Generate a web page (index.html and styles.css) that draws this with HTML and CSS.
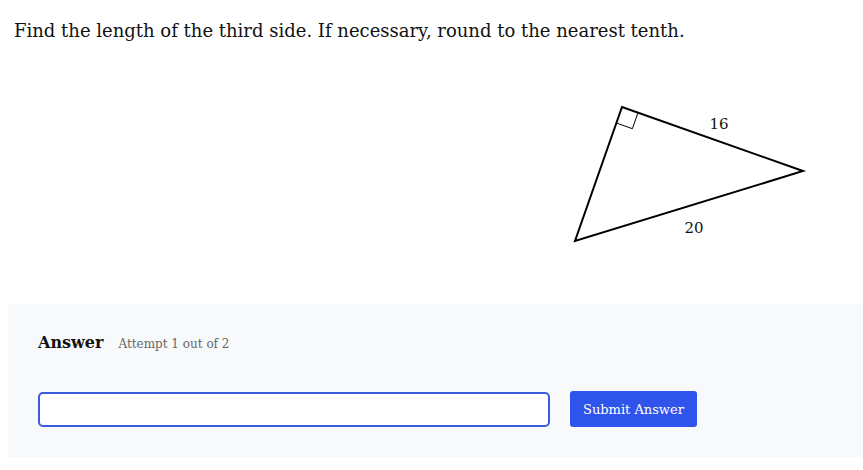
FILE: index.html
```html
<!DOCTYPE html>
<html lang="en">
<head>
  <meta charset="UTF-8" />
  <title>Question</title>
  <link rel="stylesheet" href="styles.css">
</head>
<body>

  <p class="question">Find the length of the third side. If necessary, round to the nearest tenth.</p>

  <div class="figure">
    <svg width="863" height="261" viewBox="0 43 863 261">
      <polygon points="622,107 803,171 575,241" fill="none" stroke="#000" stroke-width="2" stroke-linejoin="miter"/>
      <polyline points="638,112.7 632.4,128.7 616.4,123" fill="none" stroke="#000" stroke-width="1"/>
      <text x="719" y="129" class="label" text-anchor="middle">16</text>
      <text x="694" y="233" class="label" text-anchor="middle">20</text>
    </svg>
  </div>

  <div class="answer-panel">
    <div class="answer-head">
      <span class="answer-title">Answer</span>
      <span class="attempt">Attempt 1 out of 2</span>
    </div>
    <div class="answer-row">
      <input type="text" class="answer-input" autofocus>
      <button class="submit-btn">Submit Answer</button>
    </div>
  </div>

</body>
</html>
```

FILE: styles.css
```css
body {
  margin: 0;
  font-family: "DejaVu Serif", Georgia, serif;
  color: #111;
  background: white;
}

.question {
  margin: 0;
  padding: 19px 14px 0;
  font-size: 18px;
  line-height: 24px;
}

.figure {
  height: 261px;
  overflow: hidden;
}

.figure svg {
  display: block;
}

.label {
  font-family: "DejaVu Serif", Georgia, serif;
  font-size: 15px;
  fill: #111;
}

.answer-panel {
  margin-left: 8px;
  background: #f7f9fb;
  padding: 29px 30px 30px;
}

.answer-head {
  display: flex;
  align-items: baseline;
  gap: 15px;
}

.answer-title {
  font-weight: bold;
  font-size: 16px;
}

.attempt {
  font-size: 12px;
  color: #666;
}

.answer-row {
  display: flex;
  align-items: center;
  gap: 20px;
  margin-top: 39px;
}

.answer-input {
  width: 512px;
  height: 35px;
  box-sizing: border-box;
  border: 2px solid #3b5bdb;
  border-radius: 5px;
  outline: none;
  background: white;
  font-size: 16px;
  padding: 0 6px;
  caret-color: #000;
}

.submit-btn {
  height: 36px;
  padding: 0 13px;
  border: none;
  border-radius: 3px;
  background: #2f54eb;
  color: white;
  font-family: "DejaVu Serif", Georgia, serif;
  font-size: 13px;
  cursor: pointer;
}
```
